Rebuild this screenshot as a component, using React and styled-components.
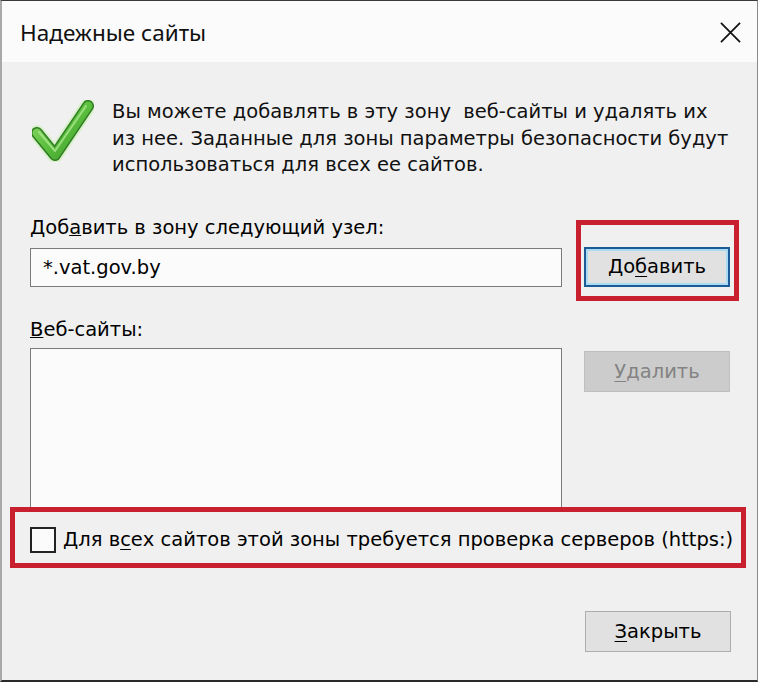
import styled, { createGlobalStyle } from 'styled-components';

const GlobalStyle = createGlobalStyle`
  html, body {
    margin: 0;
    padding: 0;
    background: #ffffff;
  }
  body {
    font-family: "DejaVu Sans", "Noto Sans", sans-serif;
    color: #000;
  }
`

function CheckMark(){
  return (
    <svg width="62" height="62" viewBox="0 0 62 62">
      <defs>
        <linearGradient id="chk" x1="0" y1="0" x2="1" y2="1">
          <stop offset="0" stopColor="#8fdc6a" />
          <stop offset="0.5" stopColor="#5cbf3e" />
          <stop offset="1" stopColor="#3c9a2a" />
        </linearGradient>
      </defs>
      <polyline points="5,33 23,55 56,6" fill="none" stroke="#c9f0b0" strokeWidth="16" strokeLinecap="round" strokeLinejoin="round" opacity="0.55" />
      <polyline points="5,33 23,55 56,6" fill="none" stroke="#2f7d22" strokeWidth="12" strokeLinecap="round" strokeLinejoin="round" />
      <polyline points="5,33 23,55 56,6" fill="none" stroke="url(#chk)" strokeWidth="9" strokeLinecap="round" strokeLinejoin="round" />
      <polyline points="7,32 23,51 54,6" fill="none" stroke="#b6ee98" strokeWidth="2" strokeLinecap="round" strokeLinejoin="round" opacity="0.7" />
    </svg>
  )
}

export default function App(){
  return (
    <>
      <GlobalStyle />
      <Window>
        <TitleBar>
          <Title>Надежные сайты</Title>
          <CloseIcon viewBox="0 0 22 22">
            <path d="M1 1 L21 21 M21 1 L1 21" stroke="#111" strokeWidth="1.8" fill="none" />
          </CloseIcon>
        </TitleBar>
        <Content>
          <Intro>
            <IconBox><CheckMark /></IconBox>
            <IntroText>
              Вы можете добавлять в эту зону&nbsp; веб-сайты и удалять их<br />
              из нее. Заданные для зоны параметры безопасности будут<br />
              использоваться для всех ее сайтов.
            </IntroText>
          </Intro>

          <Form>
            <Label>Доб<u>а</u>вить в зону следующий узел:</Label>
            <span />
            <TextField>*.vat.gov.by</TextField>
            <Highlight>
              <Button $focused>До<u>б</u>авить</Button>
            </Highlight>
            <Label $gap><u>В</u>еб-сайты:</Label>
            <span />
            <SiteList />
            <ButtonCell>
              <Button $disabled><u>У</u>далить</Button>
            </ButtonCell>
          </Form>

          <CheckRow>
            <Box />
            <CheckLabel>Для в<u>с</u>ех сайтов этой зоны требуется проверка серверов (https:)</CheckLabel>
          </CheckRow>

          <Footer>
            <Button><u>З</u>акрыть</Button>
          </Footer>
        </Content>
      </Window>
    </>
  )
}

const Window = styled.div`
  box-sizing: border-box;
  width: 758px;
  height: 682px;
  background: #f0f0f0;
  border: 1px solid #8a8a8a;
  border-left: 2px solid #a9a9a9;
  border-top: 1px solid #3a3a3a;
  border-bottom: 2px solid #2a2a2a;
  display: flex;
  flex-direction: column;
`

const TitleBar = styled.div`
  height: 61px;
  flex-shrink: 0;
  background: #fbfbfb;
  display: flex;
  align-items: center;
  justify-content: space-between;
  padding: 0 16px 0 18px;
`

const Title = styled.div`
  font-family: "Noto Sans", sans-serif;
  font-size: 22.5px;
  color: #111;
  margin-top: 1px;
`

const CloseIcon = styled.svg`
  width: 21px;
  height: 21px;
  margin-top: 1px;
`

const Content = styled.div`
  padding: 0 26px 0 28px;
  display: flex;
  flex-direction: column;
  font-size: 19.5px;
`

const Intro = styled.div`
  display: flex;
  align-items: flex-start;
  margin-top: 37px;
`

const IconBox = styled.div`
  width: 62px;
  margin: 0 18px 0 2px;
  padding-top: 1px;
`

const IntroText = styled.div`
  line-height: 26.5px;
  color: #111;
  flex: 1;
  white-space: nowrap;
`

const Form = styled.div`
  display: grid;
  grid-template-columns: 532px 146px;
  column-gap: 22px;
  margin-top: 36px;
`

const Label = styled.div`
  line-height: 26px;
  margin-top: ${p => p.$gap ? '30px' : '0'};
  margin-bottom: ${p => p.$gap ? '5px' : '7px'};
`

const TextField = styled.div`
  box-sizing: border-box;
  height: 39px;
  border: 1px solid #7a7a7a;
  background: #fbfbfb;
  padding-left: 12px;
  display: flex;
  align-items: center;
`

const Highlight = styled.div`
  position: relative;
  margin-top: -1px;
  &::after {
    content: '';
    position: absolute;
    left: -8px;
    right: -9px;
    top: -27px;
    bottom: -14px;
    border: 5px solid #c8202f;
    pointer-events: none;
  }
`

const ButtonCell = styled.div`
  padding-top: 3px;
`

const Button = styled.div`
  box-sizing: border-box;
  width: 146px;
  height: ${p => p.$focused ? '40px' : '41px'};
  display: flex;
  align-items: center;
  justify-content: center;
  background: ${p => p.$disabled ? '#cccccc' : '#e1e1e1'};
  color: ${p => p.$disabled ? '#838383' : '#000'};
  border: ${p => p.$focused ? '2px solid #1d5a96' : p.$disabled ? '1px solid #bfbfbf' : '1px solid #adadad'};
  box-shadow: ${p => p.$focused ? 'inset 0 0 0 2px #a9dbf5' : 'none'};
  u {
    text-decoration-thickness: 1px;
    text-underline-offset: 3px;
  }
`

const SiteList = styled.div`
  height: 158px;
  background: #fbfbfb;
  border: 1px solid #7a7a7a;
  border-bottom: none;
`

const CheckRow = styled.div`
  display: flex;
  align-items: center;
  gap: 7px;
  margin: 0 -15px 0 -20px;
  height: 61px;
  box-sizing: border-box;
  border: 5px solid #c8202f;
  padding: 5px 0 0 15px;
  background: #f0f0f0;
`

const Box = styled.div`
  box-sizing: border-box;
  width: 26px;
  height: 26px;
  border: 2px solid #222;
  background: #fbfbfb;
`

const CheckLabel = styled.div`
  line-height: 26px;
  white-space: nowrap;
  u {
    text-decoration-thickness: 1px;
    text-underline-offset: 3px;
  }
`

const Footer = styled.div`
  display: flex;
  justify-content: flex-end;
  margin-top: 43px;
`
